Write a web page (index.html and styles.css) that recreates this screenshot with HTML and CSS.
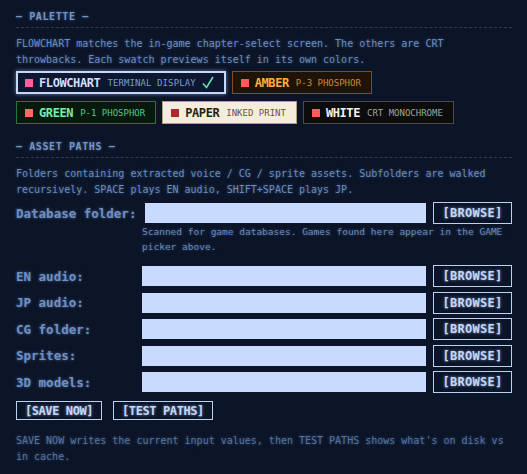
FILE: index.html
```html
<!DOCTYPE html>
<html lang="en">
<head>
    <meta charset="UTF-8">
    <meta name="viewport" content="width=device-width, initial-scale=1">
    <title>Settings</title>
    <link rel="stylesheet" href="styles.css">
</head>
<body>
    <div class="panel">
        <section class="section">
            <h2 class="section-title">— PALETTE —</h2>
            <p class="desc">FLOWCHART matches the in-game chapter-select screen. The others are CRT throwbacks. Each swatch previews itself in its own colors.</p>
            <div class="swatches">
                <button class="swatch sw-flow">
                    <span class="chip"></span>
                    <span class="sw-name">FLOWCHART</span>
                    <span class="sw-sub">TERMINAL DISPLAY</span>
                    <svg class="check" width="12" height="13" viewBox="0 0 12 13"><path d="M1 7.5 L4.5 11.5 L11 1" fill="none" stroke="#5fe3b4" stroke-width="1.6"/></svg>
                </button>
                <button class="swatch sw-amber">
                    <span class="chip"></span>
                    <span class="sw-name">AMBER</span>
                    <span class="sw-sub">P-3 PHOSPHOR</span>
                </button>
                <button class="swatch sw-green">
                    <span class="chip"></span>
                    <span class="sw-name">GREEN</span>
                    <span class="sw-sub">P-1 PHOSPHOR</span>
                </button>
                <button class="swatch sw-paper">
                    <span class="chip"></span>
                    <span class="sw-name">PAPER</span>
                    <span class="sw-sub">INKED PRINT</span>
                </button>
                <button class="swatch sw-white">
                    <span class="chip"></span>
                    <span class="sw-name">WHITE</span>
                    <span class="sw-sub">CRT MONOCHROME</span>
                </button>
            </div>
        </section>

        <section class="section">
            <h2 class="section-title">— ASSET PATHS —</h2>
            <p class="desc">Folders containing extracted voice / CG / sprite assets. Subfolders are walked recursively. SPACE plays EN audio, SHIFT+SPACE plays JP.</p>

            <div class="path-row db-row">
                <label class="path-label wide">Database folder:</label>
                <input class="path-input" type="text">
                <button class="btn browse">[BROWSE]</button>
            </div>
            <p class="hint">Scanned for game databases. Games found here appear in the GAME picker above.</p>

            <div class="paths">
                <div class="path-row">
                    <label class="path-label">EN audio:</label>
                    <input class="path-input" type="text">
                    <button class="btn browse">[BROWSE]</button>
                </div>
                <div class="path-row">
                    <label class="path-label">JP audio:</label>
                    <input class="path-input" type="text">
                    <button class="btn browse">[BROWSE]</button>
                </div>
                <div class="path-row">
                    <label class="path-label">CG folder:</label>
                    <input class="path-input" type="text">
                    <button class="btn browse">[BROWSE]</button>
                </div>
                <div class="path-row">
                    <label class="path-label">Sprites:</label>
                    <input class="path-input" type="text">
                    <button class="btn browse">[BROWSE]</button>
                </div>
                <div class="path-row">
                    <label class="path-label">3D models:</label>
                    <input class="path-input" type="text">
                    <button class="btn browse">[BROWSE]</button>
                </div>
            </div>

            <div class="actions">
                <button class="btn action save">[SAVE NOW]</button>
                <button class="btn action test">[TEST PATHS]</button>
            </div>
            <p class="desc footnote">SAVE NOW writes the current input values, then TEST PATHS shows what's on disk vs in cache.</p>
        </section>
    </div>
</body>
</html>
```

FILE: styles.css
```css
body {
    margin: 0;
    background: #0c1528;
    font-family: "DejaVu Sans Mono", "Liberation Mono", monospace;
    color: #6e8fc2;
}

.panel {
    padding: 10px 15px 0 16px;
}

.section {
    margin-bottom: 16px;
}

.section-title {
    margin: 0;
    font-size: 10px;
    line-height: 14px;
    font-weight: bold;
    letter-spacing: 0.6px;
    color: #7594c4;
    padding-bottom: 3px;
    border-bottom: 1px dashed #2c3d5c;
    text-shadow: 0 0 3px rgba(110, 150, 210, 0.55);
}

.desc {
    margin: 8px 0 0;
    font-size: 10px;
    line-height: 16px;
    color: #6a8bbe;
    text-shadow: 0 0 3px rgba(100, 140, 200, 0.5);
}

/* palette swatches */
.swatches {
    display: flex;
    flex-wrap: wrap;
    gap: 7px 6px;
    margin-top: 3px;
    width: 460px;
}

.swatch {
    display: flex;
    align-items: center;
    height: 23px;
    padding: 0 10px 0 8px;
    border: 1px solid;
    font-family: inherit;
    cursor: pointer;
    box-sizing: border-box;
}

.chip {
    width: 8px;
    height: 8px;
    margin-right: 6px;
}

.sw-name {
    font-size: 12px;
    font-weight: bold;
    letter-spacing: -0.4px;
    margin-right: 7px;
}

.sw-sub {
    font-size: 9px;
    letter-spacing: 0;
}

.check {
    margin-left: 6px;
}

.sw-flow {
    border: 2px solid #c6d8fa;
    background: #0d1830;
    padding: 0 10px 0 7px;
    box-shadow: 0 0 4px rgba(170, 200, 255, 0.6);
}
.sw-flow .chip { background: #ff5e9c; }
.sw-flow .sw-name { color: #d2def6; }
.sw-flow .sw-sub { color: #7c9cca; letter-spacing: 0.1px; }

.sw-amber {
    border-color: #8a4a12;
    background: #1f1307;
}
.sw-amber .chip { background: #ff5a58; }
.sw-amber .sw-name { color: #ffae3c; }
.sw-amber .sw-sub { color: #d08a34; }

.sw-green {
    border-color: #1f7a3e;
    background: #07180e;
}
.sw-green .chip { background: #ff6a62; }
.sw-green .sw-name { color: #72f0a4; }
.sw-green .sw-sub { color: #4fc985; }

.sw-paper {
    border-color: #b89d74;
    background: #f5eddb;
}
.sw-paper .chip { background: #b02828; }
.sw-paper .sw-name { color: #2a1f16; }
.sw-paper .sw-sub { color: #6b5242; }

.sw-white {
    border-color: #4a4a4a;
    background: #0c0c0d;
}
.sw-white .chip { background: #ff5a5c; }
.sw-white .sw-name { color: #f2f2f2; }
.sw-white .sw-sub { color: #a2a2a2; }

/* asset paths */
.path-row {
    display: flex;
    align-items: center;
    gap: 7px;
    height: 22px;
}

.db-row {
    margin-top: 4px;
}

.path-label {
    width: 119px;
    font-size: 12.5px;
    font-weight: bold;
    color: #6f8fc2;
    text-shadow: 0 0 3px rgba(110, 150, 210, 0.6);
    white-space: nowrap;
}

.path-label.wide {
    width: auto;
    margin-right: 2px;
}

.path-input {
    flex: 1;
    min-width: 0;
    height: 20px;
    border: none;
    padding: 0;
    background: #c8dbff;
}

.btn {
    font-family: inherit;
    font-weight: bold;
    background: #0c1528;
    color: #c6d6f2;
    border: 1.5px solid #bcd0f2;
    text-shadow: 0 0 3px rgba(170, 200, 255, 0.7);
    cursor: pointer;
    padding: 0;
    box-sizing: border-box;
}

.browse {
    width: 79px;
    height: 22px;
    font-size: 12px;
    letter-spacing: 0.3px;
}

.hint {
    margin: 0 0 0 126px;
    font-size: 9.5px;
    line-height: 15px;
    color: #6888bb;
    text-shadow: 0 0 3px rgba(100, 140, 200, 0.5);
}

.paths {
    display: flex;
    flex-direction: column;
    gap: 4.5px;
    margin-top: 11px;
}

.actions {
    display: flex;
    gap: 11px;
    margin-top: 8px;
}

.action {
    height: 19px;
    font-size: 12px;
    letter-spacing: -0.4px;
}

.save { width: 86px; }
.test { width: 100px; }

.footnote {
    margin-top: 13px;
    color: #55739f;
}
```
